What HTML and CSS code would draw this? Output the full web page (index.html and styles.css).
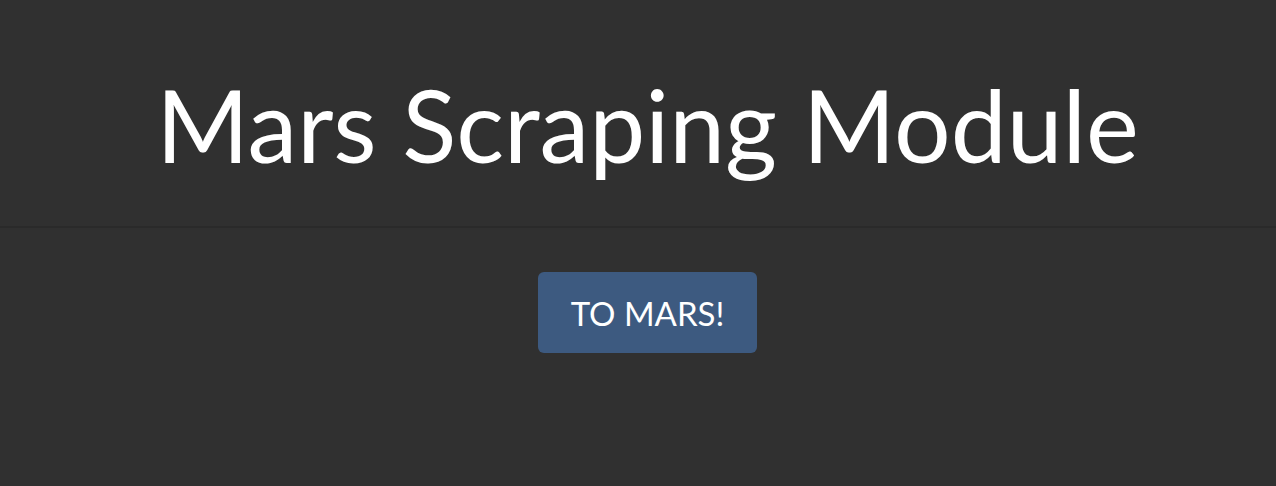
FILE: index.html
```html
<!DOCTYPE html>
<html>
<head>
<meta charset="utf-8">
<link rel="stylesheet" href="styles.css">
</head>
<body>
<header class="hero">
  <h1 class="title">Mars Scraping Module</h1>
</header>
<main class="actions">
  <button class="btn">TO MARS!</button>
</main>
</body>
</html>
```
FILE: styles.css
```css
html, body {
  margin: 0;
  padding: 0;
  background: #303030;
  height: 100%;
}
body {
  font-family: Lato, "Open Sans", sans-serif;
  color: #fff;
  padding-left: 19px;
  box-sizing: border-box;
}
.hero {
  border-bottom: 2px solid #2a2a2a;
  margin-left: -19px;
  padding-left: 19px;
  height: 226px;
  display: flex;
  justify-content: center;
  align-items: flex-start;
}
.title {
  margin: 64px 0 0;
  font-weight: 400;
  font-size: 100px;
  line-height: 120px;
  letter-spacing: 0;
}
.actions {
  display: flex;
  justify-content: center;
  padding-top: 44px;
}
.btn {
  background: #3d5a80;
  color: #fff;
  border: none;
  border-radius: 6px;
  font-family: Lato, sans-serif;
  font-size: 33px;
  width: 219px;
  height: 81px;
  padding: 0;
  cursor: pointer;
}
```
